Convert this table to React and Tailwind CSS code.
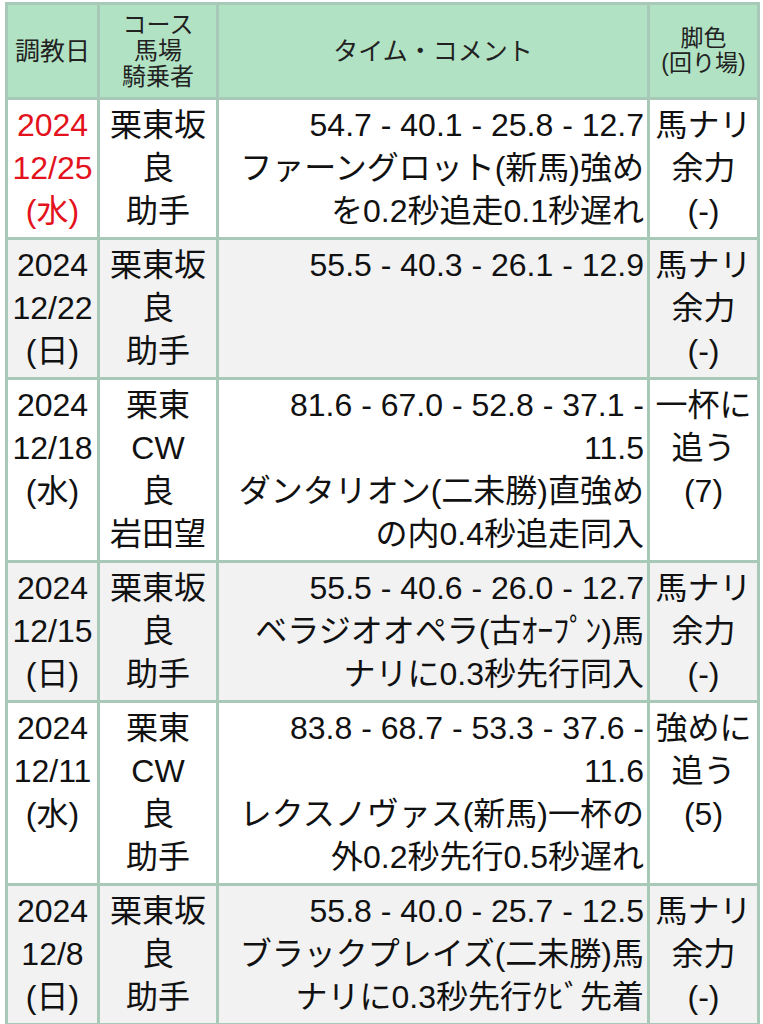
import React from 'react';

const rows = [
  {
    date: ['2024', '12/25', '(水)'],
    red: true,
    course: ['栗東坂', '良', '助手'],
    time: ['54.7 - 40.1 - 25.8 - 12.7'],
    comment: ['ファーングロット(新馬)強め', 'を0.2秒追走0.1秒遅れ'],
    leg: ['馬ナリ', '余力', '(-)'],
  },
  {
    date: ['2024', '12/22', '(日)'],
    course: ['栗東坂', '良', '助手'],
    time: ['55.5 - 40.3 - 26.1 - 12.9'],
    comment: [],
    leg: ['馬ナリ', '余力', '(-)'],
  },
  {
    date: ['2024', '12/18', '(水)'],
    course: ['栗東', 'CW', '良', '岩田望'],
    time: ['81.6 - 67.0 - 52.8 - 37.1 -', '11.5'],
    comment: ['ダンタリオン(二未勝)直強め', 'の内0.4秒追走同入'],
    leg: ['一杯に', '追う', '(7)'],
  },
  {
    date: ['2024', '12/15', '(日)'],
    course: ['栗東坂', '良', '助手'],
    time: ['55.5 - 40.6 - 26.0 - 12.7'],
    comment: ['ベラジオオペラ(古ｵｰﾌﾟﾝ)馬', 'ナリに0.3秒先行同入'],
    leg: ['馬ナリ', '余力', '(-)'],
  },
  {
    date: ['2024', '12/11', '(水)'],
    course: ['栗東', 'CW', '良', '助手'],
    time: ['83.8 - 68.7 - 53.3 - 37.6 -', '11.6'],
    comment: ['レクスノヴァス(新馬)一杯の', '外0.2秒先行0.5秒遅れ'],
    leg: ['強めに', '追う', '(5)'],
  },
  {
    date: ['2024', '12/8', '(日)'],
    course: ['栗東坂', '良', '助手'],
    time: ['55.8 - 40.0 - 25.7 - 12.5'],
    comment: ['ブラックプレイズ(二未勝)馬', 'ナリに0.3秒先行ｸﾋﾞ先着'],
    leg: ['馬ナリ', '余力', '(-)'],
  },
];

const Lines = ({ items }) =>
  items.map((t, i) => (
    <div key={i} className="whitespace-nowrap">
      {t}
    </div>
  ));

export default function App() {
  return (
    <div className="bg-white pl-[5px] pt-[2px] font-['Liberation_Sans','Noto_Sans_CJK_JP',sans-serif] text-[#111]">
      <table className="w-[752px] table-fixed border-collapse border-[3px] border-[#a8c8b8]">
        <colgroup>
          <col className="w-[92px]" />
          <col className="w-[119px]" />
          <col className="w-[431px]" />
          <col className="w-[110px]" />
        </colgroup>
        <thead>
          <tr className="h-[95px] bg-[#b2e2c4] text-[#222]">
            <th className="border-[3px] border-[#a8c8b8] p-0 text-center align-middle text-[25px] font-normal leading-[30px]">
              調教日
            </th>
            <th className="border-[3px] border-[#a8c8b8] p-0 text-center align-middle text-[24px] font-normal leading-[26px]">
              <div>コース</div>
              <div>馬場</div>
              <div>騎乗者</div>
            </th>
            <th className="border-[3px] border-[#a8c8b8] p-0 text-center align-middle text-[25px] font-normal leading-[30px]">
              タイム・コメント
            </th>
            <th className="border-[3px] border-[#a8c8b8] p-0 text-center align-middle text-[23px] font-normal leading-[25px]">
              <div>脚色</div>
              <div>(回り場)</div>
            </th>
          </tr>
        </thead>
        <tbody className="text-[32px] leading-[43px]">
          {rows.map((r, i) => (
            <tr key={i} className={i % 2 === 1 ? 'bg-[#f2f2f2]' : 'bg-white'}>
              <td
                className={`border-[3px] border-[#a8c8b8] px-0 py-[4px] text-center align-top ${
                  r.red ? 'text-[#e3121c]' : ''
                }`}
              >
                <Lines items={r.date} />
              </td>
              <td className="border-[3px] border-[#a8c8b8] px-0 py-[4px] text-center align-top">
                <Lines items={r.course} />
              </td>
              <td className="border-[3px] border-[#a8c8b8] px-[3px] py-[4px] text-right align-top">
                <Lines items={r.time} />
                <Lines items={r.comment} />
              </td>
              <td className="border-[3px] border-[#a8c8b8] px-0 py-[4px] text-center align-top">
                <Lines items={r.leg} />
              </td>
            </tr>
          ))}
        </tbody>
      </table>
    </div>
  );
}
